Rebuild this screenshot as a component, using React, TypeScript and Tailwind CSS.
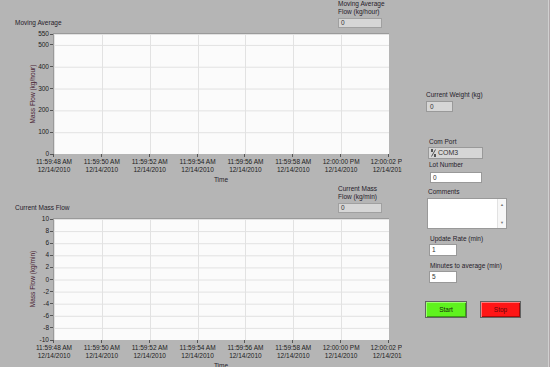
import React from "react";

const xLabels = [
  "11:59:48 AM",
  "11:59:50 AM",
  "11:59:52 AM",
  "11:59:54 AM",
  "11:59:56 AM",
  "11:59:58 AM",
  "12:00:00 PM",
  "12:00:02 PM",
];

const PLOT_W = 335;
const STEP = PLOT_W / 7;

function Indicator({ lines, value }: { lines: string[]; value: string }) {
  return (
    <div className="mb-[2px] flex flex-col">
      {lines.map((l) => (
        <div key={l} className="leading-[8px] text-[#26212a]">
          {l}
        </div>
      ))}
      <div className="mt-[2px] flex h-[10px] w-[44px] items-center border border-[#a0a0a0] bg-[#d6d6d6] pl-[2px] text-[#333]">
        {value}
      </div>
    </div>
  );
}

function Chart({
  title,
  indLabel,
  yTitle,
  ticks,
  min,
  max,
  plotH,
}: {
  title: string;
  indLabel: string[];
  yTitle: string;
  ticks: number[];
  min: number;
  max: number;
  plotH: number;
}) {
  const yPos = (v: number) => ((max - v) / (max - min)) * plotH;
  return (
    <div className="flex h-[185px] flex-col">
      <div className="flex h-[30px] items-end">
        <div className="mb-[3px] w-[338px] pl-[15px] leading-[8px] text-[#26212a]">{title}</div>
        <Indicator lines={indLabel} value="0" />
      </div>
      <div className="mt-[3px] flex">
        <div className="relative w-[53px]" style={{ height: plotH + 1 }}>
          <div className="absolute left-[33px] top-1/2 -translate-x-1/2 -translate-y-1/2 -rotate-90 whitespace-nowrap leading-[8px] text-[#4a2434]">
            {yTitle}
          </div>
          {ticks.map((t) => (
            <div
              key={t}
              className="absolute right-0 flex items-center leading-[8px] text-[#1c1c1c]"
              style={{ top: yPos(t) + 1 - 4 }}
            >
              {t}
              <span className="ml-[1px] h-px w-[3px] bg-[#555]" />
            </div>
          ))}
        </div>
        <div
          className="border-l border-t border-[#9a9a9a] bg-[#fbfbfb]"
          style={{ width: PLOT_W + 1, height: plotH + 1 }}
        >
          <svg width={PLOT_W} height={plotH} className="block">
            {ticks.map((t) => (
              <line key={t} x1={0} x2={PLOT_W} y1={yPos(t) + 0.5} y2={yPos(t) + 0.5} stroke="#e2e2e2" />
            ))}
            {xLabels.map((_, i) => (
              <line
                key={i}
                x1={Math.round(i * STEP) + 0.5}
                x2={Math.round(i * STEP) + 0.5}
                y1={0}
                y2={plotH}
                stroke="#e2e2e2"
              />
            ))}
          </svg>
        </div>
      </div>
      <div className="relative h-[22px]">
        {xLabels.map((l, i) => (
          <React.Fragment key={l}>
            <span
              className="absolute top-0 h-[3px] w-px bg-[#555]"
              style={{ left: 53 + Math.round(i * STEP) }}
            />
            <div
              className="absolute top-[4px] -translate-x-1/2 whitespace-nowrap text-center leading-[8px] text-[#1c1c1c]"
              style={{ left: 54 + i * STEP }}
            >
              <div>{l}</div>
              <div>12/14/2010</div>
            </div>
          </React.Fragment>
        ))}
      </div>
      <div className="w-[389px] pl-[53px] text-center leading-[8px] text-[#26212a]">Time</div>
    </div>
  );
}

function Label({ children, ml }: { children: React.ReactNode; ml: string }) {
  return <div className={`${ml} leading-[8px] text-[#26212a]`}>{children}</div>;
}

function VisaIcon() {
  return (
    <svg width="5" height="8" viewBox="0 0 5 8" className="mr-[2px]">
      <rect x="0" y="0" width="2" height="3" fill="#555" />
      <line x1="4.5" y1="0.5" x2="0.5" y2="7.5" stroke="#555" />
      <rect x="3" y="5" width="2" height="3" fill="#555" />
    </svg>
  );
}

export default function App() {
  return (
    <div className="flex h-[367px] w-[550px] overflow-hidden bg-[#b5b5b5] font-['Liberation_Sans',Arial,sans-serif] text-[6.5px]">
      <div className="w-[402px] shrink-0 overflow-hidden">
        <Chart
          title="Moving Average"
          indLabel={["Moving Average", "Flow (kg/hour)"]}
          yTitle="Mass Flow (kg/hour)"
          ticks={[550, 500, 400, 300, 200, 100, 0]}
          min={0}
          max={550}
          plotH={120}
        />
        <Chart
          title="Current Mass Flow"
          indLabel={["Current Mass", "Flow (kg/min)"]}
          yTitle="Mass Flow (kg/min)"
          ticks={[10, 8, 6, 4, 2, 0, -2, -4, -6, -8, -10]}
          min={-10}
          max={10}
          plotH={121}
        />
      </div>

      <div className="-ml-px flex flex-1 flex-col">
        <div className="mt-[91px]">
          <Label ml="ml-[25px]">Current Weight (kg)</Label>
          <div className="ml-[25px] mt-[2px] flex h-[11px] w-[27px] items-center border border-[#999] bg-[#d6d6d6] pl-[3px] text-[#333]">
            0
          </div>
        </div>

        <div className="mt-[26px]">
          <Label ml="ml-[28px]">Com Port</Label>
          <div className="ml-[27px] mt-[1px] flex h-[12px] w-[55px] items-center border border-[#999] bg-[#d6d6d6] pl-[2px] text-[7px] text-[#333]">
            <VisaIcon />
            COM3
          </div>
        </div>

        <div className="mt-[2px]">
          <Label ml="ml-[28px]">Lot Number</Label>
          <div className="ml-[29px] mt-[3px] flex h-[11px] w-[52px] items-center border border-[#999] bg-white pl-[2px] text-[#333]">
            0
          </div>
        </div>

        <div className="mt-[5px]">
          <Label ml="ml-[27px]">Comments</Label>
          <div className="ml-[26px] mt-[2px] flex h-[31px] w-[80px] border border-[#999] bg-white">
            <div className="flex-1" />
            <div className="flex w-[9px] flex-col items-center justify-between border-l border-[#e2e2e2] bg-[#f7f7f7] py-[3px] text-[4px] leading-[5px] text-[#777]">
              <span>▲</span>
              <span>▼</span>
            </div>
          </div>
        </div>

        <div className="mt-[6px]">
          <Label ml="ml-[29px]">Update Rate (min)</Label>
          <div className="ml-[28px] mt-[1px] flex h-[12px] w-[28px] items-center border border-[#999] bg-white pl-[2px] text-[#333]">
            1
          </div>
        </div>

        <div className="mt-[6px]">
          <Label ml="ml-[29px]">Minutes to average (min)</Label>
          <div className="ml-[28px] mt-[1px] flex h-[12px] w-[28px] items-center border border-[#999] bg-white pl-[2px] text-[#333]">
            5
          </div>
        </div>

        <div className="ml-[24px] mt-[18px] flex gap-[13px]">
          <button className="flex h-[17px] w-[42px] items-center justify-center border border-[#626262] bg-[#5ff21e] text-[#14240a] shadow-[inset_1px_1px_0_#9dff70,inset_-1px_-1px_0_#3aa012]">
            Start
          </button>
          <button className="flex h-[17px] w-[41px] items-center justify-center border border-[#626262] bg-[#ff1616] text-[#600808] shadow-[inset_1px_1px_0_#ff7a7a,inset_-1px_-1px_0_#b00808]">
            Stop
          </button>
        </div>
      </div>
      <div className="w-px bg-[#d0d0d0]" />
      <div className="w-px bg-[#b0a8aa]" />
    </div>
  );
}
